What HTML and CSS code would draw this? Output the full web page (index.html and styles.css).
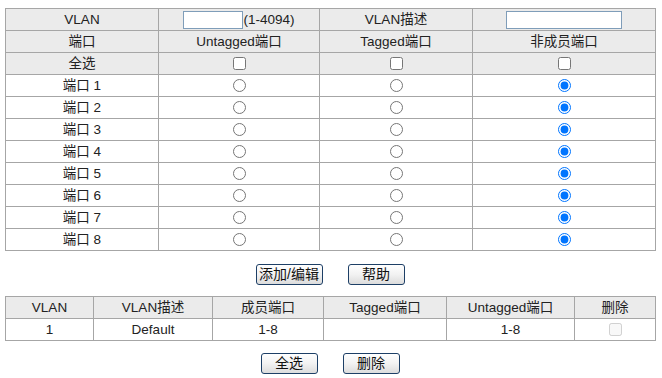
FILE: index.html
```html
<!DOCTYPE html>
<html>
<head>
<meta charset="utf-8">
<link rel="stylesheet" href="styles.css">
</head>
<body>
<div class="page">
  <table class="grid main">
    <colgroup>
      <col class="c1"><col class="c2"><col class="c3"><col class="c4">
    </colgroup>
    <tr class="head">
      <td>VLAN</td>
      <td><input type="text" class="vid"><span>(1-4094)</span></td>
      <td>VLAN描述</td>
      <td><input type="text" class="desc"></td>
    </tr>
    <tr class="head">
      <td>端口</td><td>Untagged端口</td><td>Tagged端口</td><td>非成员端口</td>
    </tr>
    <tr class="head">
      <td>全选</td>
      <td><input type="checkbox"></td>
      <td><input type="checkbox"></td>
      <td><input type="checkbox"></td>
    </tr>
    <tr><td>端口 1</td><td><input type="radio" name="p1"></td><td><input type="radio" name="p1"></td><td><input type="radio" name="p1" checked></td></tr>
    <tr><td>端口 2</td><td><input type="radio" name="p2"></td><td><input type="radio" name="p2"></td><td><input type="radio" name="p2" checked></td></tr>
    <tr><td>端口 3</td><td><input type="radio" name="p3"></td><td><input type="radio" name="p3"></td><td><input type="radio" name="p3" checked></td></tr>
    <tr><td>端口 4</td><td><input type="radio" name="p4"></td><td><input type="radio" name="p4"></td><td><input type="radio" name="p4" checked></td></tr>
    <tr><td>端口 5</td><td><input type="radio" name="p5"></td><td><input type="radio" name="p5"></td><td><input type="radio" name="p5" checked></td></tr>
    <tr><td>端口 6</td><td><input type="radio" name="p6"></td><td><input type="radio" name="p6"></td><td><input type="radio" name="p6" checked></td></tr>
    <tr><td>端口 7</td><td><input type="radio" name="p7"></td><td><input type="radio" name="p7"></td><td><input type="radio" name="p7" checked></td></tr>
    <tr><td>端口 8</td><td><input type="radio" name="p8"></td><td><input type="radio" name="p8"></td><td><input type="radio" name="p8" checked></td></tr>
  </table>

  <div class="actions first">
    <button class="btn wide">添加/编辑</button>
    <button class="btn">帮助</button>
  </div>

  <table class="grid list">
    <colgroup>
      <col class="d1"><col class="d2"><col class="d3"><col class="d4"><col class="d5"><col class="d6">
    </colgroup>
    <tr class="head">
      <td>VLAN</td><td>VLAN描述</td><td>成员端口</td><td>Tagged端口</td><td>Untagged端口</td><td>删除</td>
    </tr>
    <tr>
      <td>1</td><td>Default</td><td>1-8</td><td></td><td>1-8</td><td><input type="checkbox" disabled></td>
    </tr>
  </table>

  <div class="actions second">
    <button class="btn">全选</button>
    <button class="btn">删除</button>
  </div>
</div>
</body>
</html>
```

FILE: styles.css
```css
html, body {
  margin: 0;
  padding: 0;
  background: #ffffff;
}

body {
  font-family: "Liberation Sans", "Noto Sans CJK SC", sans-serif;
  font-size: 13.5px;
  color: #222222;
}

.page {
  padding: 8px 0 0 5px;
  width: 650px;
}

.grid {
  border-collapse: collapse;
  table-layout: fixed;
  width: 650px;
}

.grid td {
  border: 1px solid #a6a6a6;
  text-align: center;
  padding: 0;
  height: 21px;
  line-height: 16px;
  vertical-align: middle;
  white-space: nowrap;
}

.grid tr.head td {
  background: #ebebeb;
}

.c1 { width: 153px; }
.c2 { width: 161px; }
.c3 { width: 153px; }
.c4 { width: 183px; }

.d1 { width: 88px; }
.d2 { width: 119px; }
.d3 { width: 111px; }
.d4 { width: 123px; }
.d5 { width: 128px; }
.d6 { width: 81px; }

input[type="text"] {
  box-sizing: border-box;
  height: 18px;
  border: 1px solid #7f9db9;
  margin: 0;
  padding: 0 2px;
  vertical-align: middle;
  background: #fff;
}

.vid { width: 60px; }
.desc { width: 116px; }

input[type="checkbox"],
input[type="radio"] {
  margin: 0;
  width: 13px;
  height: 13px;
  vertical-align: middle;
}

.actions {
  display: flex;
  justify-content: center;
  gap: 25px;
}

.actions.first { margin: 13px 0 11px; }
.actions.second { margin: 12px 0 0; }

.btn {
  box-sizing: border-box;
  width: 57px;
  height: 21px;
  padding: 0;
  font-family: "Liberation Sans", "Noto Sans CJK SC", sans-serif;
  font-size: 14px;
  line-height: 19px;
  color: #111;
  border: 1px solid #1d3f66;
  border-radius: 3px;
  background: linear-gradient(#ffffff, #f2f2f2 50%, #dcdcdc);
}

.btn.wide { width: 67px; }
```
